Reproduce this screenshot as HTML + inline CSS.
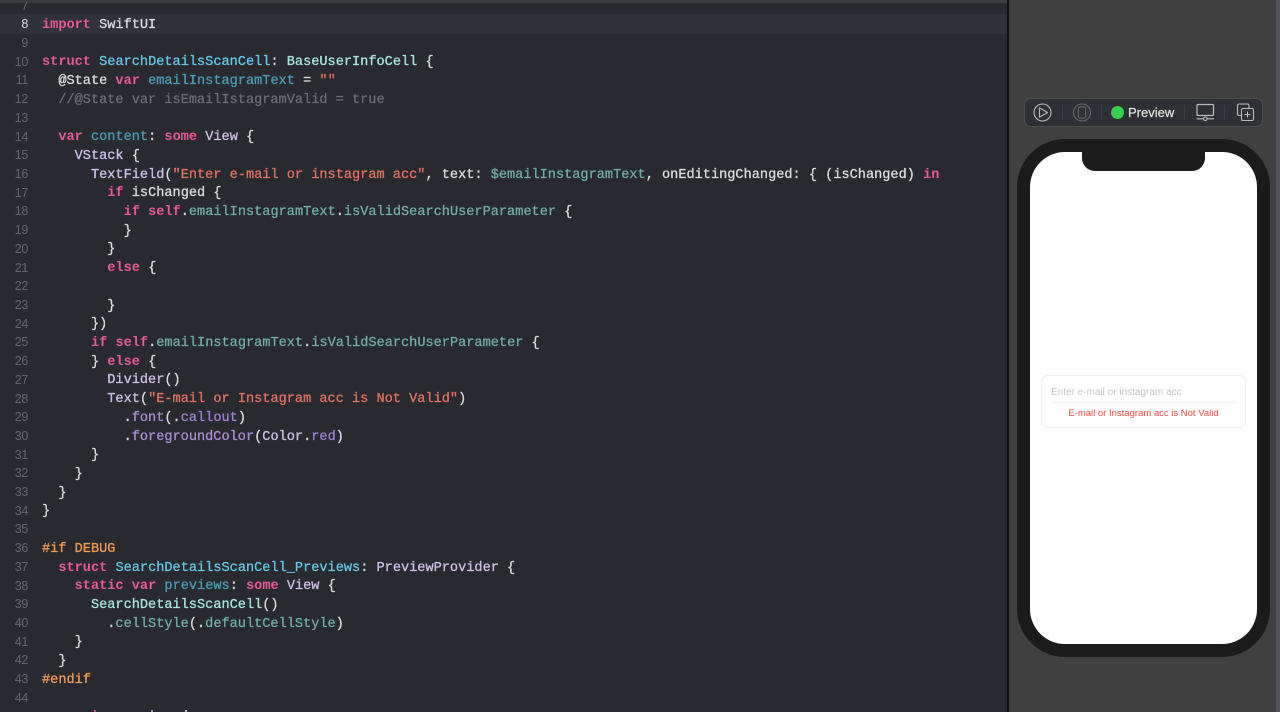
<!DOCTYPE html>
<html><head><meta charset="utf-8"><title>SearchDetailsScanCell</title>
<style>
html,body{margin:0;padding:0;background:#292a30;overflow:hidden;height:712px}
body{width:1280px;position:relative;font-family:"Liberation Mono",monospace}
.abs{position:absolute}
#wrap{position:absolute;left:0;top:0;width:1280px;height:712px;overflow:hidden}
#topbar{left:0;top:0;width:1007px;height:3px;background:#3b3c40}
#cur{left:0;top:14px;width:1007px;height:20px;background:#2f3239}
#code{position:absolute;left:0;top:2.4px;width:1007px;height:709px;overflow:hidden;filter:blur(.25px)}
.n{position:absolute;left:0;width:28px;margin-top:-1.7px;text-align:right;font:12.5px/18.7px "Liberation Sans",sans-serif;letter-spacing:-.3px;color:#66676c;height:18.7px}
.l{position:absolute;left:42px;height:18.7px;font:13.6px/18.7px "Liberation Mono",monospace;white-space:pre;color:#dcdcde;-webkit-text-stroke:.3px currentColor}
.k{color:#e65a96;font-weight:bold;-webkit-text-stroke:0}
.d{color:#62c6e6}
.t{color:#cdbfe8}
.f{color:#a88ed2}
.b{color:#a6e6d8}
.v{color:#4a9cb6}
.p{color:#6fae9e}
.s{color:#e0725f}
.m{color:#ef9a50}
.c{color:#696d75}
.e{color:#9d80d4}
#pv{left:1009px;top:0;width:271px;height:712px;background:#404040}
#sep{left:1007px;top:0;width:2px;height:712px;background:#101114}
#sb{left:1276px;top:0;width:4px;height:712px;background:#50545a}
#tb{left:1024px;top:98px;width:239px;height:29px;box-sizing:border-box;background:#2e3035;border:1px solid #4a4c50;border-radius:7px}
.tsep{position:absolute;top:105px;width:1px;height:15px;background:#3b3d42}
#phone{left:1017px;top:139px;width:253px;height:518px;background:#1b1b1b;border-radius:48px}
#screen{left:1030px;top:152px;width:227px;height:492px;background:#fff;border-radius:35px}
#notch{left:1082px;top:152px;width:123px;height:19px;background:#1b1b1b;border-radius:0 0 13px 13px}
#card{left:1041px;top:375px;width:205px;height:53px;box-sizing:border-box;background:#fff;border:1px solid #eeeeee;border-radius:7px}
#ph{left:1051px;top:386px;font:10px/14px "Liberation Sans",sans-serif;color:#c4c4c6;white-space:nowrap}
#dv{left:1051px;top:402px;width:185px;height:1px;background:#f1f1f1}
#er{left:1041px;width:205px;top:407px;text-align:center;font:9.5px/13px "Liberation Sans",sans-serif;color:#f2483f;white-space:nowrap}
#pre{left:1128px;top:104px;font:13px/17px "Liberation Sans",sans-serif;color:#e4e4e4;white-space:nowrap;-webkit-text-stroke:.2px #e4e4e4}
#dot{left:1111px;top:106px;width:13px;height:13px;border-radius:50%;background:#35d14f}
</style></head><body>
<div id="wrap">
<div class="abs" id="topbar"></div>
<div class="abs" id="cur"></div>
<div id="code">
<div class="n" style="top:-4px">7</div>
<div class="n" style="top:14.6px;color:#dedee0">8</div>
<div class="n" style="top:33.3px">9</div>
<div class="n" style="top:52px">10</div>
<div class="n" style="top:70.7px">11</div>
<div class="n" style="top:89.4px">12</div>
<div class="n" style="top:108.1px">13</div>
<div class="n" style="top:126.9px">14</div>
<div class="n" style="top:145.6px">15</div>
<div class="n" style="top:164.3px">16</div>
<div class="n" style="top:183px">17</div>
<div class="n" style="top:201.7px">18</div>
<div class="n" style="top:220.4px">19</div>
<div class="n" style="top:239.1px">20</div>
<div class="n" style="top:257.8px">21</div>
<div class="n" style="top:276.5px">22</div>
<div class="n" style="top:295.2px">23</div>
<div class="n" style="top:313.9px">24</div>
<div class="n" style="top:332.7px">25</div>
<div class="n" style="top:351.4px">26</div>
<div class="n" style="top:370.1px">27</div>
<div class="n" style="top:388.8px">28</div>
<div class="n" style="top:407.5px">29</div>
<div class="n" style="top:426.2px">30</div>
<div class="n" style="top:444.9px">31</div>
<div class="n" style="top:463.6px">32</div>
<div class="n" style="top:482.3px">33</div>
<div class="n" style="top:501px">34</div>
<div class="n" style="top:519.7px">35</div>
<div class="n" style="top:538.4px">36</div>
<div class="n" style="top:557.2px">37</div>
<div class="n" style="top:575.9px">38</div>
<div class="n" style="top:594.6px">39</div>
<div class="n" style="top:613.3px">40</div>
<div class="n" style="top:632px">41</div>
<div class="n" style="top:650.7px">42</div>
<div class="n" style="top:669.4px">43</div>
<div class="n" style="top:688.1px">44</div>

<div class="l" style="top:14.6px"><span class="k">import</span> SwiftUI</div>
<div class="l" style="top:52px"><span class="k">struct</span> <span class="d">SearchDetailsScanCell</span>: <span class="b">BaseUserInfoCell</span> {</div>
<div class="l" style="top:70.7px">  @State <span class="k">var</span> <span class="v">emailInstagramText</span> = <span class="s">""</span></div>
<div class="l c" style="top:89.4px">  //@State var isEmailIstagramValid = true</div>
<div class="l" style="top:126.9px">  <span class="k">var</span> <span class="v">content</span>: <span class="k">some</span> <span class="t">View</span> {</div>
<div class="l" style="top:145.6px">    <span class="t">VStack</span> {</div>
<div class="l" style="top:164.3px">      <span class="t">TextField</span>(<span class="s">"Enter e-mail or instagram acc"</span>, text: <span class="p">$emailInstagramText</span>, onEditingChanged: { (isChanged) <span class="k">in</span></div>
<div class="l" style="top:183px">        <span class="k">if</span> isChanged {</div>
<div class="l" style="top:201.7px">          <span class="k">if</span> <span class="k">self</span>.<span class="p">emailInstagramText</span>.<span class="p">isValidSearchUserParameter</span> {</div>
<div class="l" style="top:220.4px">          }</div>
<div class="l" style="top:239.1px">        }</div>
<div class="l" style="top:257.8px">        <span class="k">else</span> {</div>
<div class="l" style="top:295.2px">        }</div>
<div class="l" style="top:313.9px">      })</div>
<div class="l" style="top:332.7px">      <span class="k">if</span> <span class="k">self</span>.<span class="p">emailInstagramText</span>.<span class="p">isValidSearchUserParameter</span> {</div>
<div class="l" style="top:351.4px">      } <span class="k">else</span> {</div>
<div class="l" style="top:370.1px">        <span class="t">Divider</span>()</div>
<div class="l" style="top:388.8px">        <span class="t">Text</span>(<span class="s">"E-mail or Instagram acc is Not Valid"</span>)</div>
<div class="l" style="top:407.5px">          .<span class="f">font</span>(.<span class="e">callout</span>)</div>
<div class="l" style="top:426.2px">          .<span class="f">foregroundColor</span>(<span class="t">Color</span>.<span class="e">red</span>)</div>
<div class="l" style="top:444.9px">      }</div>
<div class="l" style="top:463.6px">    }</div>
<div class="l" style="top:482.3px">  }</div>
<div class="l" style="top:501px">}</div>
<div class="l" style="top:538.4px"><span class="m">#if DEBUG</span></div>
<div class="l" style="top:557.2px">  <span class="k">struct</span> <span class="d">SearchDetailsScanCell_Previews</span>: <span class="t">PreviewProvider</span> {</div>
<div class="l" style="top:575.9px">    <span class="k">static</span> <span class="k">var</span> <span class="v">previews</span>: <span class="k">some</span> <span class="t">View</span> {</div>
<div class="l" style="top:594.6px">      <span class="b">SearchDetailsScanCell</span>()</div>
<div class="l" style="top:613.3px">        .<span class="p">cellStyle</span>(.<span class="p">defaultCellStyle</span>)</div>
<div class="l" style="top:632px">    }</div>
<div class="l" style="top:650.7px">  }</div>
<div class="l" style="top:669.4px"><span class="m">#endif</span></div>
</div>

<div class="abs" style="left:94px;top:710px;width:2px;height:2px;background:#b0568a"></div>
<div class="abs" style="left:151px;top:710px;width:2px;height:2px;background:#a79ac0"></div>
<div class="abs" style="left:185px;top:710px;width:2px;height:2px;background:#b8b8ba"></div>

<div class="abs" id="sep"></div>
<div class="abs" id="pv"></div>
<div class="abs" id="sb"></div>

<div class="abs" id="tb"></div>
<div class="tsep" style="left:1062px"></div>
<div class="tsep" style="left:1101px"></div>
<div class="tsep" style="left:1184px"></div>
<div class="tsep" style="left:1224px"></div>

<svg class="abs" style="left:1024px;top:98px" width="239" height="29" viewBox="0 0 239 29" fill="none">
  <circle cx="18.500" cy="14.500" r="8.500" stroke="#b9babc" stroke-width="1.100"/>
  <path d="M15.500 9.800 L23.500 14.500 L15.500 19.200 Z" stroke="#b9babc" stroke-width="1.100" stroke-linejoin="round"/>
  <circle cx="58" cy="14.500" r="8.500" stroke="#66686c" stroke-width="1.100"/>
  <rect x="54.300" y="8.800" width="7.400" height="11.400" rx="2" stroke="#66686c" stroke-width="1.100"/>
  <rect x="173" y="6.500" width="16.500" height="11" rx="1" stroke="#b9babc" stroke-width="1.200"/>
  <path d="M172.500 20.800 H190" stroke="#b9babc" stroke-width="1.200"/>
  <circle cx="181.300" cy="20.800" r="1.800" fill="#2e3035" stroke="#b9babc" stroke-width="1.100"/>
  <path d="M217 17.500 H215 A1.500 1.500 0 0 1 213.500 16 V7.500 A1.500 1.500 0 0 1 215 6 H223.500 A1.500 1.500 0 0 1 225 7.500 V10" stroke="#b9babc" stroke-width="1.100"/>
  <rect x="217.500" y="10.500" width="12" height="12" rx="1.500" stroke="#b9babc" stroke-width="1.100"/>
  <path d="M223.500 13.500 V19.500 M220.500 16.500 H226.500" stroke="#b9babc" stroke-width="1.100"/>
</svg>
<div class="abs" id="dot"></div>
<div class="abs" id="pre">Preview</div>

<div class="abs" id="phone"></div>
<div class="abs" id="screen"></div>
<div class="abs" id="notch"></div>
<div class="abs" id="card"></div>
<div class="abs" id="ph">Enter e-mail or instagram acc</div>
<div class="abs" id="dv"></div>
<div class="abs" id="er">E-mail or Instagram acc is Not Valid</div>
</div>
</body></html>
